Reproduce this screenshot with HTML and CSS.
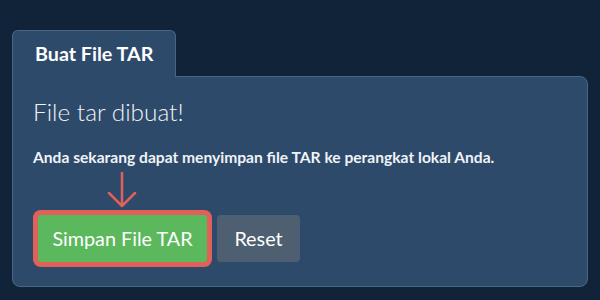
FILE: index.html
```html
<!DOCTYPE html>
<html lang="id">
<head>
<meta charset="utf-8">
<title>Buat File TAR</title>
<link rel="stylesheet" href="styles.css">
</head>
<body>
<div class="card">
  <div class="tab">Buat File TAR</div>
  <div class="panel">
    <h2 class="title">File tar dibuat!</h2>
    <p class="desc">Anda sekarang dapat menyimpan file TAR ke perangkat lokal Anda.</p>
    <div class="actions">
      <div class="highlight">
        <svg class="arrow" width="30" height="36" viewBox="0 0 30 36" aria-hidden="true">
          <path d="M15 1 V34 M2 21 L15 34 L28 21" fill="none" stroke="#e0605a" stroke-width="2.5" stroke-linecap="round" stroke-linejoin="round"/>
        </svg>
        <button class="btn btn-save">Simpan File TAR</button>
      </div>
      <button class="btn btn-reset">Reset</button>
    </div>
  </div>
</div>
</body>
</html>
```
FILE: styles.css
```css
* { box-sizing: border-box; }
html, body {
  margin: 0;
  background: #112339;
}
body {
  padding: 30px 12px 0 12px;
  font-family: Lato, "Open Sans", sans-serif;
  color: #ffffff;
}
.card {
  display: flex;
  flex-direction: column;
  align-items: flex-start;
}
.tab {
  position: relative;
  z-index: 1;
  background: #2d4a6b;
  border: 1px solid #4a6686;
  border-bottom: none;
  border-radius: 6px 6px 0 0;
  padding: 2px 22px 0 22px;
  height: 47px;
  margin-bottom: -1px;
  font-size: 19.7px;
  font-weight: 700;
  line-height: 42px;
  color: #ffffff;
}
.panel {
  align-self: stretch;
  background: #2d4a6b;
  border: 1px solid #4a6686;
  border-radius: 0 8px 8px 8px;
  padding: 19px 20px 25px 20px;
  height: 211px;
}
.title {
  margin: 0;
  font-size: 24.4px;
  font-weight: 300;
  line-height: 32px;
  color: #f0f3f6;
}
.desc {
  margin: 19px 0 0 0;
  font-size: 15.6px;
  font-weight: 700;
  line-height: 20px;
  color: #f0f3f6;
}
.actions {
  display: flex;
  gap: 10px;
  margin: 48px 0 0 5px;
}
.highlight {
  position: relative;
  display: flex;
}
.arrow {
  position: absolute;
  left: 69px;
  top: -43px;
}
.btn {
  border: none;
  border-radius: 4px;
  font-family: inherit;
  font-size: 19.8px;
  line-height: 25px;
  padding: 11px 10px;
  color: #ffffff;
}
.btn-save {
  background: #5cb85c;
  width: 169px;
  box-shadow: 0 0 0 5px #e0605a;
  border-radius: 3px;
}
.btn-reset {
  background: #4e5f71;
  width: 83px;
}
```
